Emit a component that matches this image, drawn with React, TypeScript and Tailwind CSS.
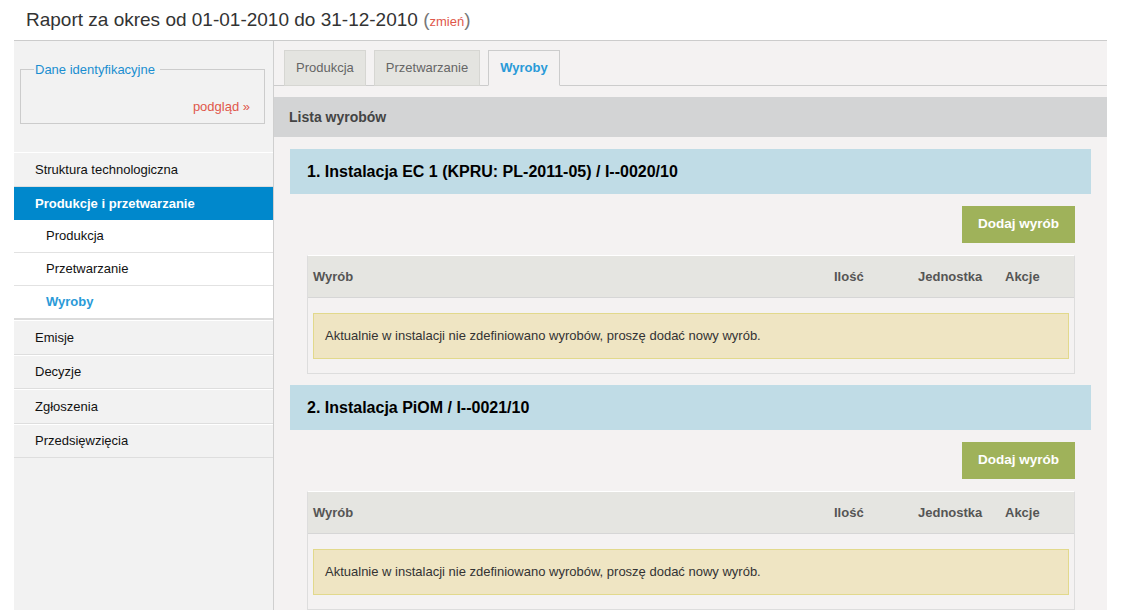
import React from "react";

const sideItems = ["Emisje", "Decyzje", "Zgłoszenia", "Przedsięwzięcia"];
const subItems = ["Produkcja", "Przetwarzanie", "Wyroby"];

const installations = [
  "1. Instalacja EC 1 (KPRU: PL-2011-05) / I--0020/10",
  "2. Instalacja PiOM / I--0021/10",
];

function Sidebar() {
  return (
    <div className="w-[260px] shrink-0 border-r border-[#cfcfcf] bg-[#f2f2f2]">
      <div className="pt-[19px] pr-[8px] pb-[28px] pl-[6px]">
        <fieldset className="border border-[#cccccc] px-[13px] pb-[7px]">
          <legend className="px-[1px] text-[13px] text-[#1a8ed0]">Dane identyfikacyjne&nbsp;</legend>
          <div className="flex justify-end pt-[17px] pr-[1px] text-[13px] text-[#e0574a]">podgląd »</div>
        </fieldset>
      </div>
      <div className="flex h-[35px] items-center border-t border-white border-b border-b-[#dedede] pl-[21px] text-[13px] text-[#111]">
        Struktura technologiczna
      </div>
      <div className="flex h-[33px] items-center bg-[#0088cc] pl-[21px] text-[13px] font-bold text-white">
        Produkcje i przetwarzanie
      </div>
      {subItems.map((s, i) => (
        <div
          key={s}
          className={
            i === 2
              ? "flex h-[34px] items-center border-b-2 border-[#dcdcdc] bg-white pl-[32px] text-[13px] font-bold text-[#2a9ad8]"
              : "flex h-[33px] items-center border-b border-[#e2e2e2] bg-white pl-[32px] text-[13px] text-[#111]"
          }
        >
          {s}
        </div>
      ))}
      {sideItems.map((s) => (
        <div
          key={s}
          className="flex h-[34.5px] items-center border-t border-white border-b border-b-[#dedede] pl-[21px] text-[13px] text-[#111]"
        >
          {s}
        </div>
      ))}
    </div>
  );
}

function Installation({ title }: { title: string }) {
  return (
    <div className="mb-[11px]">
      <div className="flex h-[45px] items-center bg-[#c0dce6] pl-[17px] text-[16px] font-bold text-black">
        {title}
      </div>
      <div className="pr-[16px] pl-[17px]">
        <div className="flex justify-end pt-[12px] pb-[12px]">
          <button className="h-[37px] w-[113px] bg-[#9fb25a] text-[13.5px] font-bold text-white">Dodaj wyrób</button>
        </div>
        <div className="border border-[#dddddd] border-t-white">
          <div className="grid h-[42px] grid-cols-[521px_84px_87px_1fr] items-center border-b border-[#d6d6d6] bg-[#e5e5e1] px-[5px] text-[13px] font-bold text-[#555]">
            <span>Wyrób</span>
            <span>Ilość</span>
            <span>Jednostka</span>
            <span>Akcje</span>
          </div>
          <div className="px-[5px] pt-[15px] pb-[14px]">
            <div className="flex h-[46px] items-center border border-[#e2d98c] bg-[#efe5c3] pl-[11px] text-[13px] text-[#333]">
              Aktualnie w instalacji nie zdefiniowano wyrobów, proszę dodać nowy wyrób.
            </div>
          </div>
        </div>
      </div>
    </div>
  );
}

export default function App() {
  return (
    <div className="min-h-[610px] bg-white font-['Liberation_Sans',Arial,sans-serif]">
      <div className="flex h-[40px] items-center pl-[26px] pt-[1px] text-[19px] text-[#333]">
        Raport za okres od 01-01-2010 do 31-12-2010&nbsp;
        <span className="text-[#777]">
          (<span className="text-[13px] text-[#e0574a]">zmień</span>)
        </span>
      </div>
      <div className="mr-[16px] ml-[14px] flex min-h-[570px] border-t border-[#cccccc]">
        <Sidebar />
        <div className="flex-1 bg-[#f4f2f2]">
          <div className="flex h-[45px] items-end gap-[8px] border-b border-[#cccccc] pl-[10px]">
            <div className="-mb-px flex h-[36px] items-center border border-[#d6d6d2] bg-[#e4e4e0] px-[11px] text-[13px] text-[#666]">
              Produkcja
            </div>
            <div className="-mb-px flex h-[36px] items-center border border-[#d6d6d2] bg-[#e4e4e0] px-[11px] text-[13px] text-[#666]">
              Przetwarzanie
            </div>
            <div className="-mb-px flex h-[36px] items-center border border-[#cccccc] border-b-[#f4f2f2] bg-[#f4f2f2] px-[11px] text-[13px] font-bold text-[#2a9ad8]">
              Wyroby
            </div>
          </div>
          <div className="mt-[11px] flex h-[40px] items-center bg-[#d3d4d5] pl-[15px] text-[14px] font-bold text-[#444]">
            Lista wyrobów
          </div>
          <div className="px-[16px] pt-[12px]">
            {installations.map((t) => (
              <Installation key={t} title={t} />
            ))}
          </div>
        </div>
      </div>
    </div>
  );
}
